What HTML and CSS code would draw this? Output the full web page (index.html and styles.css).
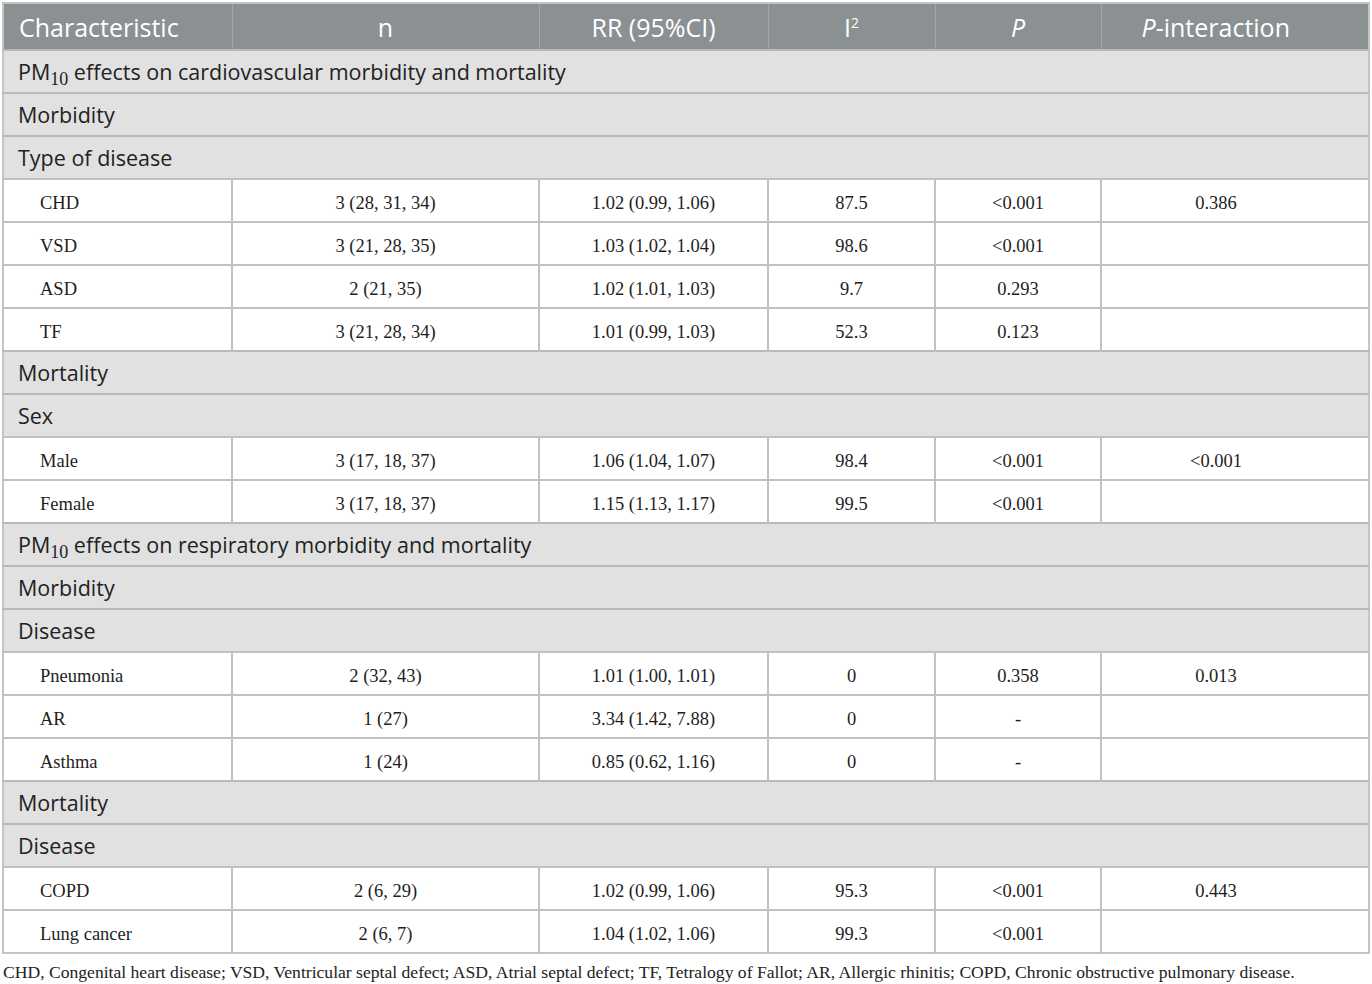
FILE: index.html
```html
<!DOCTYPE html>
<html>
<head>
<meta charset="utf-8">
<link rel="stylesheet" href="styles.css">
</head>
<body>
<div class="wrap">
<table class="tbl">
<colgroup>
<col class="c1"><col class="c2"><col class="c3"><col class="c4"><col class="c5"><col class="c6">
</colgroup>
<thead>
<tr class="head">
<th class="left">Characteristic</th><th>n</th><th>RR (95%CI)</th><th>I<sup>2</sup></th><th><i>P</i></th><th class="last"><i>P</i>-interaction</th>
</tr>
</thead>
<tbody>
<tr class="sec"><td colspan="6">PM<sub>10</sub> effects on cardiovascular morbidity and mortality</td></tr>
<tr class="sec"><td colspan="6">Morbidity</td></tr>
<tr class="sec"><td colspan="6">Type of disease</td></tr>
<tr class="row"><td class="lab">CHD</td><td>3 (28, 31, 34)</td><td>1.02 (0.99, 1.06)</td><td>87.5</td><td>&lt;0.001</td><td class="last">0.386</td></tr>
<tr class="row"><td class="lab">VSD</td><td>3 (21, 28, 35)</td><td>1.03 (1.02, 1.04)</td><td>98.6</td><td>&lt;0.001</td><td class="last"></td></tr>
<tr class="row"><td class="lab">ASD</td><td>2 (21, 35)</td><td>1.02 (1.01, 1.03)</td><td>9.7</td><td>0.293</td><td class="last"></td></tr>
<tr class="row"><td class="lab">TF</td><td>3 (21, 28, 34)</td><td>1.01 (0.99, 1.03)</td><td>52.3</td><td>0.123</td><td class="last"></td></tr>
<tr class="sec"><td colspan="6">Mortality</td></tr>
<tr class="sec"><td colspan="6">Sex</td></tr>
<tr class="row"><td class="lab">Male</td><td>3 (17, 18, 37)</td><td>1.06 (1.04, 1.07)</td><td>98.4</td><td>&lt;0.001</td><td class="last">&lt;0.001</td></tr>
<tr class="row"><td class="lab">Female</td><td>3 (17, 18, 37)</td><td>1.15 (1.13, 1.17)</td><td>99.5</td><td>&lt;0.001</td><td class="last"></td></tr>
<tr class="sec"><td colspan="6">PM<sub>10</sub> effects on respiratory morbidity and mortality</td></tr>
<tr class="sec"><td colspan="6">Morbidity</td></tr>
<tr class="sec"><td colspan="6">Disease</td></tr>
<tr class="row"><td class="lab">Pneumonia</td><td>2 (32, 43)</td><td>1.01 (1.00, 1.01)</td><td>0</td><td>0.358</td><td class="last">0.013</td></tr>
<tr class="row"><td class="lab">AR</td><td>1 (27)</td><td>3.34 (1.42, 7.88)</td><td>0</td><td>-</td><td class="last"></td></tr>
<tr class="row"><td class="lab">Asthma</td><td>1 (24)</td><td>0.85 (0.62, 1.16)</td><td>0</td><td>-</td><td class="last"></td></tr>
<tr class="sec"><td colspan="6">Mortality</td></tr>
<tr class="sec"><td colspan="6">Disease</td></tr>
<tr class="row"><td class="lab">COPD</td><td>2 (6, 29)</td><td>1.02 (0.99, 1.06)</td><td>95.3</td><td>&lt;0.001</td><td class="last">0.443</td></tr>
<tr class="row"><td class="lab">Lung cancer</td><td>2 (6, 7)</td><td>1.04 (1.02, 1.06)</td><td>99.3</td><td>&lt;0.001</td><td class="last"></td></tr>
</tbody>
</table>
<p class="note">CHD, Congenital heart disease; VSD, Ventricular septal defect; ASD, Atrial septal defect; TF, Tetralogy of Fallot; AR, Allergic rhinitis; COPD, Chronic obstructive pulmonary disease.</p>
</div>
</body>
</html>
```

FILE: styles.css
```css
html, body {
  margin: 0;
  padding: 0;
  background: #ffffff;
}
.wrap {
  padding: 2px 2px 0 2px;
}
.tbl {
  width: 1368px;
  border-collapse: collapse;
  table-layout: fixed;
  border: 2px solid #c4c6c4;
}
.c1 { width: 229px; }
.c2 { width: 307px; }
.c3 { width: 229px; }
.c4 { width: 167px; }
.c5 { width: 166px; }
.c6 { width: 268px; }
.head th {
  background: #8b9093;
  color: #ffffff;
  font-family: "Open Sans", "Noto Sans", sans-serif;
  font-weight: 400;
  font-size: 25px;
  height: 44px;
  padding: 1px 0 0 0;
  text-align: center;
  border-left: 1px solid #a3a7a9;
  line-height: 1;
}
.head th:first-child { border-left: none; }
.head th.left {
  text-align: left;
  padding-left: 15px;
}
.head th.last,
.row td.last {
  padding-right: 38px;
}
.head sup {
  font-size: 14px;
  vertical-align: 9px;
}
.sec td {
  background: #e0e1e0;
  color: #222222;
  font-family: "Open Sans", "Noto Sans", sans-serif;
  font-size: 21.5px;
  height: 39px;
  padding: 1px 0 1px 14px;
  border-top: 2px solid #b8bab8;
  line-height: 1;
}
.sec sub {
  font-family: "Liberation Serif", serif;
  font-size: 18px;
  line-height: 0;
  vertical-align: -5px;
}
.row td {
  background: #ffffff;
  color: #1e1e1e;
  font-family: "Liberation Serif", "Times New Roman", serif;
  font-size: 18.5px;
  height: 36px;
  padding: 5px 0 0 0;
  text-align: center;
  border-top: 2px solid #c0c2c0;
  border-left: 2px solid #c0c2c0;
  line-height: 1;
}
.row td.lab {
  text-align: left;
  padding-left: 36px;
  border-left: none;
}
.note {
  margin: 8px 0 0 1px;
  font-family: "Liberation Serif", "Times New Roman", serif;
  font-size: 17.6px;
  color: #222222;
}
```
